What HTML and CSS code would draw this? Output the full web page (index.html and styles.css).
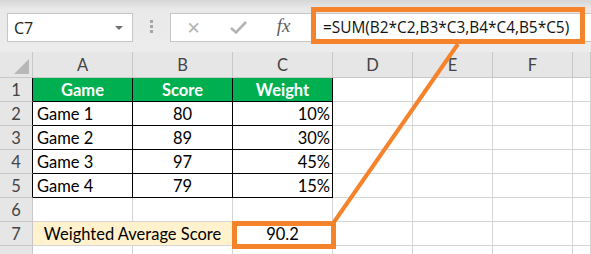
FILE: index.html
```html
<!DOCTYPE html>
<html lang="en">
<head>
    <meta charset="UTF-8">
    <title>Weighted Average Score</title>
    <link rel="stylesheet" href="styles.css">
</head>
<body>
    <div class="page">
        <div class="toolbar">
            <div class="name-box">
                <span>C7</span>
                <span class="caret"></span>
            </div>
            <div class="grip"><i></i><i></i><i></i></div>
            <div class="formula-box">
                <span class="fbtn cancel">&#x2715;</span>
                <span class="fbtn enter">
                    <svg width="17" height="13" viewBox="0 0 17 13"><path d="M1 7 L6 11.5 L16 1" fill="none" stroke="#b4b4b4" stroke-width="2.6"/></svg>
                </span>
                <span class="fbtn fx">fx</span>
                <span class="formula">=SUM(B2*C2,B3*C3,B4*C4,B5*C5)</span>
            </div>
        </div>

        <div class="sheet">
            <!-- column headers -->
            <div class="corner"></div>
            <div class="ch">A</div>
            <div class="ch">B</div>
            <div class="ch">C</div>
            <div class="ch">D</div>
            <div class="ch">E</div>
            <div class="ch">F</div>
            <div class="ch"></div>

            <!-- row 1 -->
            <div class="rh edge">1</div>
            <div class="c tb head">Game</div>
            <div class="c tb head">Score</div>
            <div class="c tb head">Weight</div>
            <div class="c"></div><div class="c"></div><div class="c"></div><div class="c"></div>

            <!-- row 2 -->
            <div class="rh edge">2</div>
            <div class="c tb left">Game 1</div>
            <div class="c tb mid">80</div>
            <div class="c tb right">10%</div>
            <div class="c"></div><div class="c"></div><div class="c"></div><div class="c"></div>

            <!-- row 3 -->
            <div class="rh edge">3</div>
            <div class="c tb left">Game 2</div>
            <div class="c tb mid">89</div>
            <div class="c tb right">30%</div>
            <div class="c"></div><div class="c"></div><div class="c"></div><div class="c"></div>

            <!-- row 4 -->
            <div class="rh edge">4</div>
            <div class="c tb left">Game 3</div>
            <div class="c tb mid">97</div>
            <div class="c tb right">45%</div>
            <div class="c"></div><div class="c"></div><div class="c"></div><div class="c"></div>

            <!-- row 5 -->
            <div class="rh edge">5</div>
            <div class="c tb left">Game 4</div>
            <div class="c tb mid">79</div>
            <div class="c tb right">15%</div>
            <div class="c"></div><div class="c"></div><div class="c"></div><div class="c"></div>

            <!-- row 6 -->
            <div class="rh">6</div>
            <div class="c"></div><div class="c"></div><div class="c"></div>
            <div class="c"></div><div class="c"></div><div class="c"></div><div class="c"></div>

            <!-- row 7 -->
            <div class="rh">7</div>
            <div class="c label">Weighted Average Score</div>
            <div class="c mid">90.2</div>
            <div class="c"></div><div class="c"></div><div class="c"></div><div class="c"></div>

            <!-- row 8, only its top edge shows -->
            <div class="rh"></div>
            <div class="c"></div><div class="c"></div><div class="c"></div>
            <div class="c"></div><div class="c"></div><div class="c"></div><div class="c"></div>
        </div>

        <!-- callout over the formula and the result cell -->
        <svg class="callout" width="591" height="254" viewBox="0 0 591 254">
            <rect x="313.5" y="9.5" width="269" height="32" fill="none" stroke="#f5832b" stroke-width="5"/>
            <line x1="458" y1="44" x2="334" y2="222" stroke="#f5832b" stroke-width="4"/>
            <rect x="234.5" y="223.5" width="99" height="23" fill="none" stroke="#f5832b" stroke-width="5"/>
        </svg>
    </div>
</body>
</html>
```

FILE: styles.css
```css
body {
    margin: 0;
    background: #fff;
    font-family: Lato, "Liberation Sans", sans-serif;
}

.page {
    position: relative;
    width: 591px;
    height: 254px;
    overflow: hidden;
}

/* formula bar */
.toolbar {
    height: 52px;
    display: flex;
    align-items: flex-start;
    padding-top: 13px;
    box-sizing: border-box;
    background: linear-gradient(#d6d6d6, #e9e9e9 9px, #ececec);
}

.name-box {
    width: 126px;
    height: 29px;
    margin-left: 7px;
    box-sizing: border-box;
    border: 1px solid #c6c6c6;
    background: #fff;
    display: flex;
    align-items: center;
    justify-content: space-between;
    padding: 0 9px 0 6px;
    font-family: "Open Sans", sans-serif;
    font-size: 16px;
    color: #222;
}

.caret {
    width: 0;
    height: 0;
    border-left: 4px solid transparent;
    border-right: 4px solid transparent;
    border-top: 4px solid #707070;
}

.grip {
    width: 37px;
    display: flex;
    flex-direction: column;
    align-items: center;
    gap: 2px;
    padding-top: 7px;
}

.grip i {
    width: 3px;
    height: 3px;
    background: #a6a6a6;
}

.formula-box {
    flex: 1;
    height: 29px;
    margin-right: -20px;
    box-sizing: border-box;
    border: 1px solid #c6c6c6;
    background: #fff;
    display: flex;
    align-items: center;
}

.fbtn {
    width: 45px;
    text-align: center;
    color: #b4b4b4;
}

.cancel {
    font-size: 17px;
    font-family: "DejaVu Sans", sans-serif;
}

.enter svg {
    display: block;
    margin: 0 auto;
}

.fx {
    font-family: "Liberation Serif", serif;
    font-style: italic;
    font-size: 19px;
    color: #5e5e5e;
    margin-bottom: 3px;
}

.formula {
    margin-left: 17px;
    font-family: "Open Sans", sans-serif;
    font-size: 15.4px;
    color: #111;
    white-space: nowrap;
}

/* grid */
.sheet {
    display: grid;
    grid-template-columns: 33px 100px 100px 100px 80px 80px 80px 1fr;
    grid-template-rows: 26px;
    grid-auto-rows: 24px;
    font-size: 16.5px;
}

.corner,
.ch,
.rh {
    background: #e6e6e6;
    color: #444;
    box-sizing: border-box;
    border-right: 1px solid #c8c8c8;
    border-bottom: 1px solid #c8c8c8;
    display: flex;
    align-items: center;
    justify-content: center;
}

.ch {
    align-items: flex-end;
    padding-bottom: 2px;
}

.corner {
    position: relative;
}

.corner::after {
    content: "";
    position: absolute;
    right: 3px;
    bottom: 3px;
    border-left: 15px solid transparent;
    border-bottom: 15px solid #b7b7b7;
}

.rh.edge {
    border-right-color: #000;
}

.c {
    box-sizing: border-box;
    border-right: 1px solid #d4d4d4;
    border-bottom: 1px solid #d4d4d4;
    display: flex;
    align-items: center;
    padding: 0 4px;
    color: #000;
    white-space: nowrap;
}

.tb {
    border-right-color: #000;
    border-bottom-color: #000;
}

.head {
    background: #00b050;
    color: #fff;
    font-weight: bold;
    justify-content: center;
}

.left {
    justify-content: flex-start;
}

.mid {
    justify-content: center;
}

.right {
    justify-content: flex-end;
    padding-right: 2px;
}

.label {
    grid-column: span 2;
    background: #fff2cc;
    justify-content: center;
}

.callout {
    position: absolute;
    left: 0;
    top: 0;
    pointer-events: none;
}
```
